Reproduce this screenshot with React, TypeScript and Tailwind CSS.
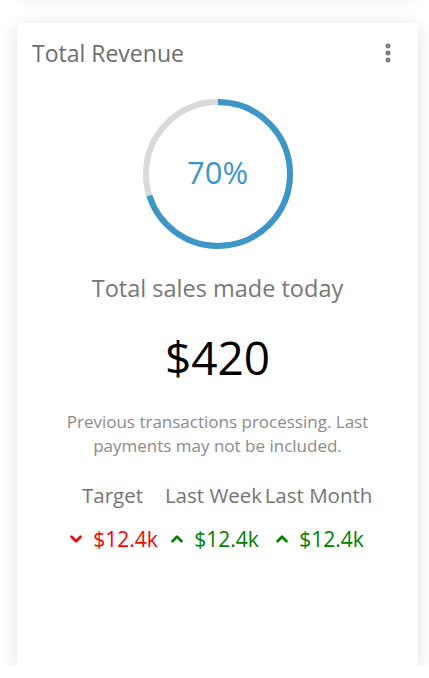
import { ChevronDown, ChevronUp, MoreVertical } from "lucide-react"

const stats = [
  { label: "Target", value: "$12.4k", up: false },
  { label: "Last Week", value: "$12.4k", up: true },
  { label: "Last Month", value: "$12.4k", up: true },
]

function Ring({ percent }: { percent: number }) {
  const r = 72
  const c = 2 * Math.PI * r
  return (
    <div className="relative w-[150px] h-[150px]">
      <svg width="150" height="150" viewBox="0 0 150 150" className="-rotate-90">
        <circle cx="75" cy="75" r={r} fill="none" stroke="#d9d9d9" strokeWidth="6" />
        <circle
          cx="75"
          cy="75"
          r={r}
          fill="none"
          stroke="#3c97c8"
          strokeWidth="6"
          strokeDasharray={`${(c * percent) / 100} ${c}`}
        />
      </svg>
      <div className="absolute inset-0 flex items-center justify-center pb-[4px] text-[31px] text-[#3c97c8]">
        {percent}%
      </div>
    </div>
  )
}

export default function App() {
  return (
    <div className="min-h-screen bg-white font-['Open_Sans',sans-serif]">
      {/* card above, only its shadow shows */}
      <div className="ml-[17px] mr-[11px] h-[20px] -mt-[26px] bg-white shadow-[0_4px_16px_rgba(0,0,0,0.08)]" />

      <div className="ml-[17px] mr-[11px] mt-[29px] h-[643px] bg-white shadow-[0_4px_18px_rgba(0,0,0,0.13)] px-[15px] pt-[15px] flex flex-col items-center">
        <div className="w-full flex items-center justify-between">
          <h2 className="text-[23px] leading-[30px] text-[#6e6e6e]">Total Revenue</h2>
          <MoreVertical className="w-6 h-6 text-[#757575] mr-[3px]" strokeWidth={3} />
        </div>

        <div className="mt-[31px]">
          <Ring percent={70} />
        </div>

        <p className="mt-[24px] text-[23.5px] leading-[30px] text-[#777777]">Total sales made today</p>

        <p className="mt-[29px] text-[46px] leading-[50px] text-black">$420</p>

        <p className="mt-[28px] max-w-[330px] text-[17px] leading-[24px] text-[#8c8c8c] text-center">
          Previous transactions processing. Last payments may not be included.
        </p>

        <div className="mt-[23px] grid grid-cols-[102px_100px_110px] text-center">
          {stats.map((s) => (
            <div key={s.label} className="text-[20.5px] leading-[28px] text-[#757575] whitespace-nowrap">
              {s.label}
            </div>
          ))}
          {stats.map((s, i) => (
            <div
              key={i}
              className={`mt-[16px] flex items-center justify-center gap-[8px] text-[21px] leading-[28px] ${
                s.up ? "text-[#008000]" : "text-[#ff0000]"
              }`}
            >
              {s.up ? (
                <ChevronUp className="w-[18px] h-[18px]" strokeWidth={3.5} />
              ) : (
                <ChevronDown className="w-[18px] h-[18px]" strokeWidth={3.5} />
              )}
              {s.value}
            </div>
          ))}
        </div>
      </div>
    </div>
  )
}
